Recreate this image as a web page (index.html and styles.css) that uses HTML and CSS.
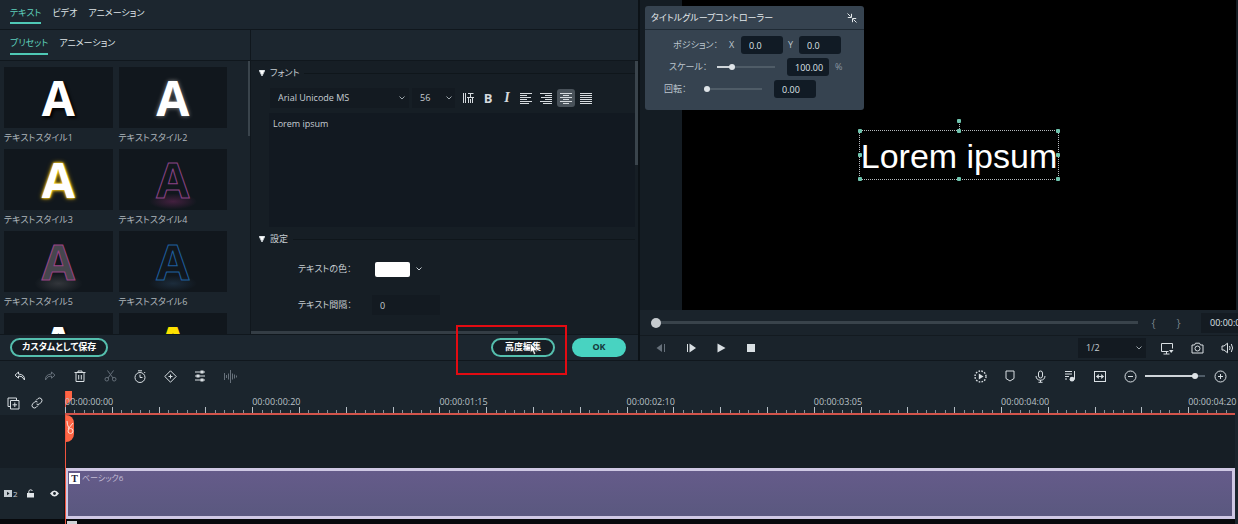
FILE: index.html
```html
<!DOCTYPE html>
<html lang="ja">
<head>
<meta charset="utf-8">
<title>タイトル編集</title>
<link rel="stylesheet" href="styles.css">
</head>
<body>
<main class="app">
  <section class="editor">
    <nav class="tabs">
      <button class="tab active">テキスト</button>
      <button class="tab">ビデオ</button>
      <button class="tab">アニメーション</button>
    </nav>
    <div class="tabs-split">
      <nav class="tabs">
        <button class="tab active">プリセット</button>
        <button class="tab">アニメーション</button>
      </nav>
    </div>
    <div class="editor-body">
      <div class="presets">
        <button class="preset"><span class="thumb plain">A</span><span>テキストスタイル1</span></button>
        <button class="preset"><span class="thumb halo">A</span><span>テキストスタイル2</span></button>
        <button class="preset"><span class="thumb gold">A</span><span>テキストスタイル3</span></button>
        <button class="preset"><span class="thumb pink">A</span><span>テキストスタイル4</span></button>
        <button class="preset"><span class="thumb gray">A</span><span>テキストスタイル5</span></button>
        <button class="preset"><span class="thumb blue">A</span><span>テキストスタイル6</span></button>
        <button class="preset"><span class="thumb plain">A</span></button>
        <button class="preset"><span class="thumb yellow">A</span></button>
        <i class="vbar"></i>
      </div>
      <div class="settings">
        <h2 class="group"><svg width="6" height="6" viewBox="0 0 6 6"><path d="M0 0h6L3 6z" fill="#fff"/></svg>フォント</h2>
        <div class="fontbar">
          <span class="select family">
            <select aria-label="フォント"><option>Arial Unicode MS</option></select>
            <svg width="6" height="4" viewBox="0 0 6 4"><path d="M.5.5 3 3 5.5.5"/></svg>
          </span>
          <span class="select size">
            <select aria-label="サイズ"><option>56</option></select>
            <svg width="6" height="4" viewBox="0 0 6 4"><path d="M.5.5 3 3 5.5.5"/></svg>
          </span>
          <button class="tool" aria-label="文字方向"><svg width="12" height="12" viewBox="0 0 12 12"><path d="M1.500 1v10M3.500 1v10M6.500 6v5M8.500 7v4M10.500 6v5M5 5.500h7M6 1.500h5.500M8.500 1.500v4"/></svg></button>
          <button class="tool" aria-label="太字"><b>B</b></button>
          <button class="tool" aria-label="斜体"><em>I</em></button>
          <button class="tool" aria-label="左揃え"><svg width="12" height="12" viewBox="0 0 12 12"><path d="M0 1.500h12M0 3.500h7M0 5.500h11M0 7.500h7M0 9.500h12M0 11.500h9"/></svg></button>
          <button class="tool" aria-label="右揃え"><svg width="12" height="12" viewBox="0 0 12 12"><path d="M0 1.500h12M5 3.500h7M1 5.500h11M5 7.500h7M0 9.500h12M3 11.500h9"/></svg></button>
          <button class="tool on" aria-label="中央揃え"><svg width="12" height="12" viewBox="0 0 12 12"><path d="M0 1.500h12M3 3.500h6M0 5.500h12M3 7.500h6M0 9.500h12M3 11.500h6"/></svg></button>
          <button class="tool" aria-label="両端揃え"><svg width="12" height="12" viewBox="0 0 12 12"><path d="M0 1.500h12M0 3.500h12M0 5.500h12M0 7.500h12M0 9.500h12M0 11.500h12"/></svg></button>
        </div>
        <textarea class="content" aria-label="テキスト">Lorem ipsum</textarea>
        <h2 class="group"><svg width="6" height="6" viewBox="0 0 6 6"><path d="M0 0h6L3 6z" fill="#fff"/></svg>設定</h2>
        <div class="field">
          <label for="color">テキストの色：</label>
          <button id="color" class="color"><i class="swatch"></i><svg width="6" height="4" viewBox="0 0 6 4"><path d="M.5.5 3 3 5.5.5"/></svg></button>
        </div>
        <div class="field">
          <label for="space">テキスト間隔：</label>
          <input id="space" class="space" value="0">
        </div>
        <i class="vbar"></i>
        <i class="hbar"></i>
      </div>
    </div>
    <footer class="actions">
      <button class="pill">カスタムとして保存</button>
      <span class="advanced">
        <button class="pill">高度編集</button>
        <i class="highlight"></i>
        <svg class="cursor" width="8" height="12" viewBox="0 0 8 12"><path d="M.5.5v9l2-1.700L4 11.500l1.600-.7-1.400-3.400H7.200z" fill="#fff" stroke="#222" stroke-width=".5"/></svg>
      </span>
      <button class="pill ok">OK</button>
    </footer>
  </section>

  <section class="player">
    <div class="stage">
      <div class="canvas">
        <div class="title-box">Lorem ipsum
          <i class="stem"></i>
          <i class="h n0"></i><i class="h nw"></i><i class="h n"></i><i class="h ne"></i><i class="h w"></i><i class="h e"></i><i class="h sw"></i><i class="h s"></i><i class="h se"></i>
        </div>
      </div>
      <aside class="controller">
        <header>タイトルグループコントローラー
          <button class="shrink" aria-label="縮小"><svg width="10" height="10" viewBox="0 0 10 10"><path d="M.5.500l3 3M4.500.800v3.700H.800M9.500 9.500l-3-3M5.500 9.200V5.500h3.700"/></svg></button>
        </header>
        <div class="crow pos"><span>ポジション：</span><label for="px">X</label><input id="px" value="0.0"><label for="py">Y</label><input id="py" value="0.0"></div>
        <div class="crow scale"><label for="sc">スケール：</label><input type="range" aria-label="スケール" min="0" max="100" value="24" style="--v:24%"><input id="sc" value="100.00"><span class="unit">%</span></div>
        <div class="crow rot"><label for="ro">回転：</label><input type="range" aria-label="回転" min="0" max="100" value="0" style="--v:0%"><input id="ro" value="0.00"></div>
      </aside>
    </div>
    <div class="scrub">
      <input type="range" aria-label="再生位置" min="0" max="100" value="0" style="--v:0%">
      <button class="brace" aria-label="開始点">{</button>
      <button class="brace" aria-label="終了点">}</button>
      <time>00:00:00:00</time>
    </div>
    <div class="transport">
      <button class="icon dim" aria-label="前のフレーム"><svg width="10" height="10" viewBox="0 0 10 10"><path class="fill" d="M6 1v8L.500 5z"/><path d="M8.500 1v8"/></svg></button>
      <button class="icon" aria-label="次のフレーム"><svg width="10" height="10" viewBox="0 0 10 10"><path class="fill" d="M3.500.500v9L10 5z"/><path d="M1.500 1v8"/></svg></button>
      <button class="icon" aria-label="再生"><svg width="10" height="10" viewBox="0 0 10 10"><path class="fill" d="M1.500.500v9L9.500 5z"/></svg></button>
      <button class="icon" aria-label="停止"><svg width="8" height="8" viewBox="0 0 8 8"><path class="fill" d="M0 0h8v8H0z"/></svg></button>
      <span class="select quality">
        <select aria-label="画質"><option>1/2</option></select>
        <svg width="6" height="4" viewBox="0 0 6 4"><path d="M.5.5 3 3 5.5.5"/></svg>
      </span>
      <button class="icon" aria-label="表示"><svg width="14" height="13" viewBox="0 0 14 13"><path d="M8.500 9.500H1.500v-8h11v5M3.500 12h6M6.500 9.500V12"/><path class="fill" d="M9 8h4.500L11.200 11z"/></svg></button>
      <button class="icon" aria-label="スナップショット"><svg width="13" height="12" viewBox="0 0 13 12"><path d="M1 3h2.500l1-1.800h4l1 1.800H12v8H1z"/><circle cx="6.500" cy="6.500" r="2.500"/></svg></button>
      <button class="icon" aria-label="音量"><svg width="13" height="12" viewBox="0 0 13 12"><path d="M1 4h2l3.500-2.800v9.600L3 8H1zM8.500 4q1.200 2 0 4M10.300 2q2.600 4 0 8"/></svg></button>
    </div>
  </section>

  <section class="timeline">
    <div class="toolbar">
      <button class="icon" aria-label="元に戻す"><svg width="12" height="10" viewBox="0 0 12 10"><path d="M4.500 1 1 4.200l3.500 3V5q4-.5 6 4 .5-5.500-6-6z"/></svg></button>
      <button class="icon dim" aria-label="やり直し"><svg width="12" height="10" viewBox="0 0 12 10"><path d="M7.500 1 11 4.200l-3.500 3V5q-4-.5-6 4-.5-5.500 6-6z"/></svg></button>
      <button class="icon" aria-label="削除"><svg width="12" height="13" viewBox="0 0 12 13"><path d="M.5 2.500h11M4 2.500v-1.500h4v1.500M2 2.500v9h8v-9M4.700 5v4.500M7.300 5v4.500"/></svg></button>
      <button class="icon dim" aria-label="分割"><svg width="13" height="12" viewBox="0 0 13 12"><circle cx="2.800" cy="9.200" r="1.800"/><circle cx="10.200" cy="9.200" r="1.800"/><path d="M4 8 9.500.5M9 8 3.500.5"/></svg></button>
      <button class="icon" aria-label="速度"><svg width="12" height="13" viewBox="0 0 12 13"><circle cx="6" cy="7.500" r="5"/><path d="M4 .8h4M6 4.500v3h2.500M10.200 2l1 1"/></svg></button>
      <button class="icon" aria-label="キーフレーム"><svg width="13" height="13" viewBox="0 0 13 13"><path d="M6.500.800l5.700 5.700-5.700 5.700L.800 6.500zM6.500 4.500v4M4.500 6.500h4"/></svg></button>
      <button class="icon" aria-label="調整"><svg width="12" height="12" viewBox="0 0 12 12"><path d="M1 2h10M1 6h10M1 10h10"/><path class="fill" d="M6.500.500h3v3h-3zM2.500 4.500h3v3h-3zM6.500 8.500h3v3h-3z"/></svg></button>
      <button class="icon dim" aria-label="音声"><svg width="14" height="13" viewBox="0 0 14 13"><path d="M1.500 3v7M3.500 5v3M5.500 3.500v6M7.500 0v13M9.500 3.500v6M11.500 4.500v4M13.500 5.500v2"/></svg></button>
      <span class="spacer"></span>
      <button class="icon" aria-label="レンダリング"><svg width="13" height="13" viewBox="0 0 13 13"><circle cx="6.500" cy="6.500" r="5.500" stroke-dasharray="1.600 1.300" stroke-width="1.400"/><path class="fill" d="M4.800 3.500v6l4.700-3z"/></svg></button>
      <button class="icon" aria-label="マーカー"><svg width="10" height="12" viewBox="0 0 10 12"><path d="M1 1h8v7.500L5 11 1 8.500z"/></svg></button>
      <button class="icon" aria-label="録音"><svg width="11" height="13" viewBox="0 0 11 13"><rect x="3.500" y="1" width="4" height="7" rx="2"/><path d="M1 6q.3 4.200 4.500 4.200T10 6M5.500 10v2M3.500 12.300h4"/></svg></button>
      <button class="icon" aria-label="オーディオミキサー"><svg width="12" height="12" viewBox="0 0 12 12"><path d="M1 1.500h7M1 4h7M1 6.500h4M1 9h2M10.500 9.500V1"/><circle class="fill" cx="8" cy="9.200" r="2.400"/></svg></button>
      <button class="icon" aria-label="全体表示"><svg width="12" height="11" viewBox="0 0 12 11"><rect x=".5" y=".5" width="11" height="10"/><path d="M2.500 5.500h7"/><path class="fill" d="M2 5.500 4.800 3v5zM10 5.500 7.200 3v5z"/></svg></button>
      <button class="icon" aria-label="縮小"><svg width="13" height="13" viewBox="0 0 13 13"><circle cx="6.500" cy="6.500" r="5.500"/><path d="M4 6.500h5"/></svg></button>
      <input class="zoom" type="range" aria-label="ズーム" min="0" max="100" value="87" style="--v:85%">
      <button class="icon" aria-label="拡大"><svg width="13" height="13" viewBox="0 0 13 13"><circle cx="6.500" cy="6.500" r="5.500"/><path d="M4 6.500h5M6.500 4v5"/></svg></button>
    </div>
    <div class="tracks">
      <div class="playhead"><i class="cap"></i><span class="snip"><svg width="8" height="14" viewBox="0 0 8 14"><path d="M1 0q0 4 2 7M7 2 2 8"/><circle cx="4.500" cy="10" r="2.500"/></svg></span></div>
      <div class="head ruler-head">
        <button class="mini" aria-label="トラック追加"><svg width="13" height="13" viewBox="0 0 13 13"><path d="M3 9.500H1v-8.500h8.500V3M3.500 3.500H12V12H3.500zM7.800 5.500v4.500M5.500 7.800h4.500"/></svg></button>
        <button class="mini" aria-label="リンク"><svg width="12" height="12" viewBox="0 0 12 12"><path d="M5 3.500 7 1.500q1.800-1.200 3.300.2 1.400 1.500.2 3.300l-2 2q-1.500 1-3 0M7 8.500l-2 2q-1.800 1.200-3.300-.2-1.400-1.500-.2-3.300l2-2q1.500-1 3 0"/></svg></button>
      </div>
      <div class="ruler">
        <div class="times"><time>00:00:00:00</time><time>00:00:00:20</time><time>00:00:01:15</time><time>00:00:02:10</time><time>00:00:03:05</time><time>00:00:04:00</time><time>00:00:04:20</time></div>
        <div class="ticks" id="ticks"></div>
      </div>
      <div class="empty-head"></div><div class="empty"></div>
      <div class="head track-head">
        <span class="track-id"><svg width="8" height="7" viewBox="0 0 8 7"><path class="fill" d="M0 0h8v7H0z"/><path d="M3 1.800v3.400l2.600-1.700z" fill="#1b242c" stroke="none"/></svg>2</span>
        <button class="lock" aria-label="ロック"><svg width="7" height="9" viewBox="0 0 7 9"><path class="fill" d="M0 4h7v4.500H0z"/><path d="M1.800 4V2.500q.2-1.700 1.900-1.700 1.300 0 1.700 1.200"/></svg></button>
        <button class="eye" aria-label="表示"><svg width="9" height="7" viewBox="0 0 9 7"><path class="fill" d="M0 3.500q4.500-6 9 0-4.500 6-9 0z"/><circle cx="4.500" cy="3.500" r="1.400" fill="#1b242c" stroke="none"/></svg></button>
      </div>
      <div class="clip"><b class="badge">T</b><span>ベーシック6</span></div>
      <div class="next-head"></div><div class="next"><i></i></div>
    </div>
  </section>
</main>
<script src="ruler.js"></script>
</body>
</html>
```
FILE: ruler.js
```js
const ticks = document.getElementById('ticks');
for (let i = 0; i < 125; i++) {
  ticks.appendChild(document.createElement('i'));
}
```
FILE: styles.css
```css
* { box-sizing: border-box; }
body {
  margin: 0;
  background: #0c1217;
  color: #c6cdd2;
  font: 9px/12px "Open Sans", "Noto Sans CJK JP", sans-serif;
  font-feature-settings: "palt";
}
button, input, select, textarea {
  margin: 0; padding: 0; border: 0; background: none; color: inherit;
  font: inherit; font-feature-settings: inherit; border-radius: 0; outline: 0;
}
select { appearance: none; }
i { font-style: normal; }
svg { display: block; flex: none; fill: none; stroke: currentColor; stroke-width: 1; }
.fill { fill: currentColor; stroke: none; }

.app {
  display: grid;
  height: 100vh;
  grid-template: minmax(0, 1fr) auto / minmax(0, 638fr) minmax(0, 598fr);
  column-gap: 2px;
  overflow: hidden;
}

/* editor */
.editor { display: flex; flex-direction: column; background: #1c262f; min-height: 0; }
.tabs { display: flex; gap: 11px; padding: 0 10px; height: 30px; align-items: flex-start; border-bottom: 1px solid #10171d; }
.tab { padding: 7px 0 3px; border-bottom: 2px solid transparent; color: #dfe4e7; white-space: nowrap; }
.tab.active { color: #5fd0bd; border-color: #4fc9b6; }
.tabs-split { display: grid; grid-template-columns: minmax(0, 251fr) minmax(0, 387fr); border-bottom: 1px solid #10171d; }
.tabs-split .tabs { border-bottom: 0; border-right: 1px solid #10171d; }
.tabs-split .tab { padding: 7px 0 4px; }
.editor-body { flex: 1; min-height: 0; display: grid; grid-template-columns: minmax(0, 251fr) minmax(0, 387fr); }
.presets {
  position: relative; overflow: hidden; background: #1a232b;
  display: grid; grid-template-columns: 1fr 1fr; align-content: start;
  gap: 0 6px; padding: 6px 23px 0 4px; border-right: 1px solid #10171d;
}
.preset { display: flex; flex-direction: column; text-align: left; height: 82px; gap: 4px; white-space: nowrap; color: #aeb6bb; }
.thumb {
  align-self: stretch; height: 61px; background: #11171d; text-align: center;
  font: bold 48px/62px "Open Sans", sans-serif; color: #fff;
}
.plain { text-shadow: 2px 2px 3px #000; }
.halo { text-shadow: 0 0 4px #888; }
.gold { text-shadow: 0 0 2px #ffd21e, 0 0 3px #ffd21e, 0 0 5px #c99a10; }
.pink { color: transparent; -webkit-text-stroke: 1px #8a4486; background: radial-gradient(24px 8px at 50% 86%, #43203f, transparent) #11171d; }
.gray { color: #46464e; -webkit-text-stroke: 1px #9b4486; background: radial-gradient(24px 10px at 50% 86%, #33363b, transparent) #11171d; }
.blue { color: transparent; -webkit-text-stroke: 1px #1f5f9d; background: radial-gradient(24px 8px at 50% 86%, #1c2c3c, transparent) #11171d; }
.yellow { color: #ffe100; }
.vbar { position: absolute; top: 0; right: 0; width: 3px; height: 104px; background: #3a444c; }
.presets .vbar { height: 75px; width: 2px; }

.settings { position: relative; overflow: hidden; background: #161e25; padding: 0 3px 0 8px; }
.group { display: flex; align-items: center; gap: 5px; margin: 0; height: 24px; font: inherit; font-feature-settings: inherit; }
.group svg { margin-bottom: 1px; }
.group::after { content: ""; flex: 1; height: 1px; background: #0f161b; }
.fontbar { display: flex; align-items: center; height: 28px; margin-left: 11px; padding-bottom: 3px; }
.select { display: grid; align-items: center; background: #131a21; }
.select > * { grid-area: 1 / 1; }
.select select { height: 20px; padding-left: 8px; }
.select svg { justify-self: end; margin-right: 4px; pointer-events: none; color: #9da6ac; }
.family { flex: 0 1 139px; margin-right: 3px; }
.size { flex: 0 1 43px; margin-right: 4px; }
.size svg { margin-right: 3px; }
.tool { flex: 0 0 18px; height: 18px; margin-right: 2px; display: grid; place-items: center; border-radius: 3px; color: #d5dade; }
.tool:nth-child(n+4) { margin-right: 1px; }
.tool:nth-child(n+6) { margin-right: 2px; }
.tool b { font-size: 13px; }
.tool em { font: italic bold 14px/14px "Liberation Serif", serif; }
.tool.on { background: #49525a; }
.content { display: block; width: calc(100% - 10px); margin-left: 10px; height: 114px; padding: 5px 4px; background: #121921; resize: none; }
.field { display: grid; grid-template-columns: 74px 1fr; align-items: center; height: 36px; padding-left: 39px; }
.color { display: flex; align-items: center; gap: 6px; justify-self: start; padding: 3px; }
.swatch { width: 35px; height: 15px; border-radius: 2px; background: #fff; }
.space { width: 68px; height: 20px; padding-left: 8px; background: #131a21; }
.hbar { position: absolute; left: 0; bottom: 0; width: 69%; height: 3px; background: #343d45; }

.actions { position: relative; z-index: 2; display: flex; align-items: center; height: 27px; padding: 0 12px 1px 10px; border-top: 1px solid #10171d; border-bottom: 1px solid #10171d; }
.pill { height: 19px; border: 2px solid #55bfae; border-radius: 10px; padding: 0 12px; color: #fff; font-weight: bold; white-space: nowrap; background: #161e25; line-height: 14px; }
.actions > .pill:first-child { margin-right: auto; min-width: 94px; padding: 0 10px; }
.advanced { position: relative; margin-right: 17px; }
.advanced .pill { display: block; min-width: 64px; }
.ok { width: 54px; background: #48d3c1; border-color: #48d3c1; color: #16383a; }
.highlight { position: absolute; inset: -13px -12px -18px -35px; border: 2px solid #e30b12; pointer-events: none; }
.cursor { position: absolute; left: 39px; top: 5px; pointer-events: none; }

/* player */
.player { display: flex; flex-direction: column; min-width: 0; background: #1a232b; overflow: hidden; }
.stage { position: relative; flex: 1; min-height: 0; display: flex; padding: 0 2px 0 42px; background: #141c23; }
.canvas { flex: 1; display: grid; place-items: center; background: #000; }
.title-box { position: relative; border: 1px dotted #b5babd; padding: 0 1px; color: #fff; font: 34px/50px "Liberation Sans", sans-serif; height: 50px; white-space: nowrap; }
.h { position: absolute; width: 4px; height: 4px; background: #6fc4ae; border-radius: 1px; }
.stem { position: absolute; left: 50%; top: -9px; height: 9px; border-left: 1px dotted #b5babd; }
.n0 { top: -12px; left: calc(50% - 2px); }
.nw, .n, .ne { top: -2px; }
.sw, .s, .se { bottom: -2px; }
.w, .e { top: calc(50% - 2px); }
.nw, .w, .sw { left: -2px; }
.n, .s { left: calc(50% - 2px); }
.ne, .e, .se { right: -2px; }
.controller { position: absolute; left: 5px; top: 6px; width: 219px; padding-bottom: 10px; background: #364350; border-radius: 3px; color: #bcc6ce; }
.controller header { display: flex; align-items: center; justify-content: space-between; height: 24px; margin-bottom: 4px; padding: 0 7px 0 6px; border-bottom: 1px solid #1f2a34; color: #e3e8eb; white-space: nowrap; }
.crow { display: flex; align-items: center; height: 22px; white-space: nowrap; }
.crow input:not([type=range]) { width: 42px; height: 18px; padding-left: 8px; background: #111b25; border-radius: 3px; color: #dfe4e8; }
.pos { padding-left: 28px; }
.pos span { width: 56px; }
.pos label { width: 12px; }
.pos input + label { margin-left: 5px; width: 11px; }
.scale { padding-left: 24px; }
.scale label { width: 48px; }
.rot { padding-left: 19px; }
.rot label { width: 40px; }
.crow [type=range] { width: 58px; margin-right: 12px; }
.unit { margin-left: 6px; color: #8b96a0; }

input[type=range] { appearance: none; height: 12px; background: linear-gradient(#cfd5d9, #cfd5d9) 0 50% / var(--v) 2px no-repeat, linear-gradient(#4f5c67, #4f5c67) 0 50% / 100% 2px no-repeat; }
input[type=range]::-webkit-slider-thumb { appearance: none; width: 6px; height: 6px; border-radius: 50%; background: #dfe4e8; }

.scrub { display: flex; align-items: center; height: 26px; padding-left: 11px; border-bottom: 1px solid #131a20; color: #dfe4e7; }
.scrub input { flex: 1; min-width: 0; background: linear-gradient(#39434b, #39434b) 0 50% / 100% 3px no-repeat; }
.scrub input::-webkit-slider-thumb { width: 10px; height: 10px; background: #c5cace; }
.brace { width: 25px; font-size: 11px; color: #77818a; }
.scrub input + .brace { margin-left: 3px; }
.scrub time { flex: 0 0 37px; margin-left: 10px; padding: 4px 0 4px 9px; background: #141b22; overflow: hidden; }
.transport { display: flex; align-items: center; height: 25px; padding-left: 6px; margin-right: -4px; border-bottom: 1px solid #10171d; }
.icon { flex: 0 0 30px; height: 24px; display: grid; place-items: center; color: #d9dfe3; }
.dim { color: #66707a; }
.quality { width: 68px; margin: 0 6px 0 auto; }
.quality select { padding-left: 8px; }

/* timeline */
.timeline { grid-column: 1 / -1; background: #1b252d; }
.toolbar { display: flex; align-items: center; height: 30px; padding: 0 3px 0 5px; }
.spacer { flex: 1; }
.zoom { width: 60px; }
.tracks { position: relative; display: grid; grid-template-columns: 65px minmax(0, 1fr); padding-right: 3px; }
.head { display: flex; align-items: center; }
.ruler-head { gap: 11px; padding-left: 7px; color: #d9dfe3; }
.ruler { position: relative; z-index: 2; border-bottom: 2px solid #d2544b; padding-top: 5px; }
.times { display: grid; grid-template-columns: repeat(6, 4fr) 1fr; height: 11px; }
.times time { min-width: 0; white-space: nowrap; color: #bac1c6; }
.ticks { display: flex; align-items: flex-end; height: 6px; }
.ticks i { flex: 1; height: 3px; border-left: 1px solid #87919a; }
.ticks i:nth-child(5n+1) { height: 6px; border-color: #b4bcc2; }
.empty, .empty-head { height: 53px; background: #161e25; }
.track-head { padding-left: 4px; border-right: 1px solid #10171d; }
.track-id { display: flex; align-items: center; gap: 1px; width: 23px; font-size: 8px; }
.lock { width: 23px; color: #e3e7ea; }
.eye { color: #e3e7ea; }
.clip { display: flex; align-items: flex-start; gap: 2px; height: 51px; padding: 2px 1px; border: 3px solid #cfc8e4; background: linear-gradient(#655b8a, #5a587f); color: #c3bdd6; }
.badge { width: 11px; height: 11px; background: #fff; color: #26233c; font: bold 10px/11px "Liberation Serif", serif; text-align: center; }
.clip span { font-size: 8px; line-height: 10px; }
.next, .next-head { height: 5px; background: #07090c; }
.next { padding: 2px; }
.next i { display: block; width: 10px; height: 3px; background: #cfd2d6; }
.playhead { position: absolute; z-index: 1; left: 65px; top: 0; bottom: 0; border-left: 1px solid #f0543f; }
.cap { position: absolute; left: 0; top: 0; width: 6px; height: 14px; background: #ff6544; clip-path: polygon(0 0, 100% 0, 100% 60%, 0 100%); }
.snip { position: absolute; left: 0; top: 24px; width: 8px; height: 27px; padding-top: 6px; background: #ff6544; border-radius: 0 8px 8px 0; color: #ffe0d8; }
```
